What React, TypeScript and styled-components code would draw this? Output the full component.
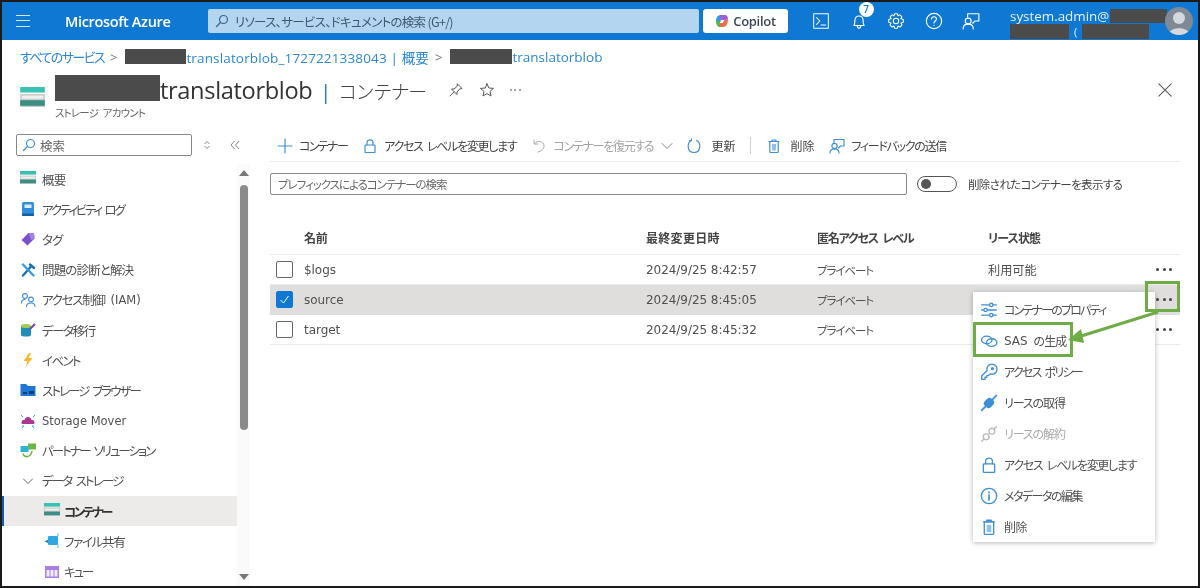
import React from "react";
import styled, { createGlobalStyle } from "styled-components";

const GlobalStyle = createGlobalStyle`
  html, body { margin: 0; padding: 0; background: #fff; }
  body { font-family: "Noto Sans CJK JP", "Noto Sans", sans-serif; font-feature-settings: "palt"; word-spacing: 3px; }
`;

const Page = styled.div`
  position: relative;
  box-sizing: border-box;
  width: 1200px;
  height: 588px;
  border: 2px solid #1a1a1a;
  overflow: hidden;
  display: flex;
  flex-direction: column;
  background: #fff;
  color: #444;
  filter: blur(0.4px);
`;

const TopBar = styled.header`
  height: 38px;
  flex: none;
  background: #0f78d3;
  display: flex;
  align-items: center;
  color: #fff;
  word-spacing: 0;
`;
const Burger = styled.div`
  margin-left: 14px;
  width: 14px;
  height: 10px;
  border-top: 1.4px solid #d5e8f8;
  border-bottom: 1.4px solid #d5e8f8;
  position: relative;
  &::after { content: ""; position: absolute; left: 0; right: 0; top: 3.6px; border-top: 1.4px solid #d5e8f8; }
`;
const Brand = styled.div`
  margin-left: 35px;
  width: 143px;
  font: 600 14.5px "Open Sans", sans-serif;
  letter-spacing: -0.35px;
`;
const GlobalSearch = styled.div`
  width: 491px;
  height: 24px;
  box-sizing: border-box;
  background: #b3d5f0;
  border-radius: 2px;
  display: flex;
  align-items: center;
  gap: 6px;
  padding-left: 7px;
  font-size: 12.5px;
  letter-spacing: -0.7px;
  color: #3f5870;
`;
const CopilotButton = styled.div`
  margin-left: 4px;
  width: 85px;
  height: 24px;
  background: #fff;
  border-radius: 3px;
  display: flex;
  align-items: center;
  justify-content: center;
  gap: 4px;
  font: 600 13px "Open Sans", sans-serif;
  letter-spacing: -0.3px;
  color: #3d4656;
`;
const TopIcons = styled.div`
  margin-left: 23px;
  display: grid;
  grid-template-columns: 20px 20px 20px 20px 20px;
  column-gap: 17.5px;
  align-items: center;
  justify-items: center;
`;
const BellWrap = styled.div`
  position: relative;
  display: flex;
`;
const Badge = styled.span`
  position: absolute;
  top: -10px;
  right: -6px;
  width: 15px;
  height: 15px;
  border-radius: 50%;
  background: #fff;
  color: #0f78d3;
  font: 600 10px/15px "Open Sans", sans-serif;
  text-align: center;
`;
const UserBlock = styled.div`
  margin-left: 29px;
  padding-top: 5px;
  width: 155px;
  display: flex;
  flex-direction: column;
  font: 13.4px/16px "Open Sans", sans-serif;
  color: #e8f2fb;
`;
const UserLine = styled.div`
  display: flex;
  align-items: center;
  height: 15.5px;
  white-space: nowrap;
`;
const Paren = styled.span`
  margin-left: 5px;
  font-size: 11px;
  line-height: 15px;
`;
const Redact = styled.span<{ $w: number; $h: number; $ml?: number }>`
  display: inline-block;
  flex: none;
  width: ${({ $w }) => $w}px;
  height: ${({ $h }) => $h}px;
  margin-left: ${({ $ml }) => $ml ?? 0}px;
  background: #4b4b4b;
`;
const TitleRedact = styled(Redact)`
  align-self: flex-start;
  margin-top: 1px;
`;
const Avatar = styled.div`
  width: 28px;
  height: 28px;
  border-radius: 50%;
  overflow: hidden;
  flex: none;
  display: flex;
`;

const Crumbs = styled.nav`
  height: 34px;
  box-sizing: border-box;
  padding: 0 0 1px 18px;
  flex: none;
  display: flex;
  align-items: center;
  color: #2b87d3;
`;
const CrumbJa = styled.span`
  font-size: 13px;
  letter-spacing: -1.6px;
  white-space: nowrap;
`;
const CrumbLatin = styled.span<{ $track: number }>`
  font: 13.5px "Open Sans", "Noto Sans CJK JP", sans-serif;
  letter-spacing: ${({ $track }) => $track}px;
  word-spacing: 0;
  white-space: nowrap;
`;
const CrumbSep = styled.span`
  margin: 0 8px 0 6px;
  color: #777;
  font: 13px "Open Sans", sans-serif;
`;

const TitleRow = styled.div`
  position: relative;
  height: 56px;
  flex: none;
  display: flex;
  padding-left: 18px;
`;
const TitleIcon = styled.div`
  margin-top: 13px;
  width: 25px;
`;
const TitleText = styled.div`
  margin-left: 10px;
  display: flex;
  flex-direction: column;
`;
const TitleLine = styled.div`
  display: flex;
  align-items: center;
  height: 32px;
`;
const TitleMain = styled.h1`
  margin: 0;
  font: 400 23.6px "Open Sans", "Noto Sans CJK JP", sans-serif;
  letter-spacing: -0.35px;
  color: #333;
  white-space: nowrap;
`;
const TitleBar = styled.span`
  font-size: 20px;
  color: #0f78d3;
  margin: 0 7px 0 8px;
`;
const TitleSuffix = styled.span`
  font: 300 19px "Noto Sans CJK JP", sans-serif;
  letter-spacing: -1.4px;
  color: #444;
`;
const TitleActions = styled.div`
  margin-left: 22px;
  display: flex;
  align-items: center;
  gap: 15px;
  color: #555;
`;
const Subtitle = styled.div`
  margin-top: -1px;
  font-size: 10.5px;
  letter-spacing: -0.8px;
  color: #666;
`;
const CloseIcon = styled.div`
  position: absolute;
  right: 24px;
  top: 7px;
  display: flex;
`;

const Body = styled.div`
  flex: 1;
  min-height: 0;
  display: grid;
  grid-template-columns: 248px 1fr;
`;

const Sidebar = styled.aside`
  display: flex;
  flex-direction: column;
  min-height: 0;
`;
const SideTop = styled.div`
  height: 34px;
  flex: none;
  display: flex;
  align-items: flex-start;
  padding: 4px 0 0 14px;
  box-sizing: border-box;
`;
const SideSearch = styled.div`
  width: 176px;
  height: 22px;
  box-sizing: border-box;
  border: 1px solid #8a8886;
  border-radius: 2px;
  display: flex;
  align-items: center;
  gap: 4px;
  padding-left: 5px;
  font-size: 12.5px;
  color: #666;
`;
const SideTool = styled.span<{ $ml: number }>`
  margin-left: ${({ $ml }) => $ml}px;
  margin-top: 5px;
  color: #888;
  display: flex;
`;
const SideMain = styled.div`
  flex: 1;
  min-height: 0;
  display: grid;
  grid-template-columns: 235px 13px;
`;
const NavList = styled.ul`
  list-style: none;
  margin: 0;
  padding: 0;
  overflow: hidden;
`;
const NavItem = styled.li<{ $sub?: boolean; $active?: boolean; $track: number }>`
  height: 30.2px;
  display: flex;
  align-items: center;
  gap: ${({ $sub }) => ($sub ? "4px" : "6px")};
  box-sizing: border-box;
  padding-left: ${({ $sub }) => ($sub ? "40px" : "16px")};
  font-size: 12.5px;
  letter-spacing: ${({ $track }) => $track}px;
  font-weight: ${({ $active }) => ($active ? 700 : 400)};
  color: ${({ $active }) => ($active ? "#333" : "#505050")};
  background: ${({ $active }) => ($active ? "#edebe9" : "transparent")};
  border-left: 2px solid ${({ $active }) => ($active ? "#0f5fa8" : "transparent")};
  white-space: nowrap;
`;
const NavIcon = styled.span`
  width: 16px;
  height: 16px;
  flex: none;
  display: flex;
`;
const NavLatin = styled.span`
  font-family: "DejaVu Sans", sans-serif;
  font-size: 11.5px;
  letter-spacing: 0;
  word-spacing: 0;
`;
const ScrollTrack = styled.div`
  display: flex;
  flex-direction: column;
  align-items: center;
  background: #fafafa;
  width: 13px;
`;
const ArrowUp = styled.div`
  margin-top: 6px;
  border-left: 5px solid transparent;
  border-right: 5px solid transparent;
  border-bottom: 6px solid #777;
`;
const ScrollThumb = styled.div`
  margin-top: 9px;
  width: 8px;
  height: 245px;
  border-radius: 4px;
  background: #8a8a8a;
`;
const ArrowDown = styled.div`
  margin-top: auto;
  margin-bottom: 6px;
  border-left: 5px solid transparent;
  border-right: 5px solid transparent;
  border-top: 6px solid #777;
`;

const Content = styled.main`
  padding: 0 18px 0 20px;
  display: flex;
  flex-direction: column;
  min-width: 0;
`;
const Toolbar = styled.div`
  height: 31px;
  flex: none;
  display: flex;
  align-items: center;
  border-bottom: 1px solid #edebe9;
  padding: 0 0 0 7px;
  font-size: 12px;
  color: #444;
`;
const ToolButton = styled.span<{ $off?: boolean; $after?: number; $inner?: number; $track?: number }>`
  display: flex;
  align-items: center;
  gap: ${({ $inner }) => $inner ?? 6}px;
  margin-right: ${({ $after }) => $after ?? 15}px;
  letter-spacing: ${({ $track }) => $track ?? -1.3}px;
  color: ${({ $off }) => ($off ? "#a3a3a3" : "#444")};
  white-space: nowrap;
`;
const ToolDivider = styled.span`
  width: 1px;
  height: 17px;
  background: #d2d0ce;
  margin-right: 15px;
`;
const FilterRow = styled.div`
  margin-top: 10px;
  display: flex;
  align-items: center;
  height: 23px;
  flex: none;
`;
const FilterInput = styled.div`
  width: 637px;
  height: 22px;
  box-sizing: border-box;
  border: 1px solid #8a8886;
  border-radius: 2px;
  padding-left: 7px;
  font-size: 11.5px;
  line-height: 20px;
  letter-spacing: -1.05px;
  color: #666;
`;
const Toggle = styled.div`
  margin-left: 10px;
  width: 40px;
  height: 16px;
  box-sizing: border-box;
  border: 1px solid #555;
  border-radius: 8px;
  display: flex;
  align-items: center;
  padding-left: 3px;
  &::before { content: ""; width: 10px; height: 10px; border-radius: 50%; background: #555; }
`;
const ToggleLabel = styled.span`
  margin-left: 11px;
  font-size: 11.5px;
  letter-spacing: -0.65px;
  color: #444;
`;

const Table = styled.div`
  margin-top: 28px;
  display: flex;
  flex-direction: column;
`;
const Row = styled.div<{ $head?: boolean; $selected?: boolean }>`
  display: grid;
  grid-template-columns: 34px 342px 171px 171px 1fr 32px;
  align-items: center;
  height: ${({ $head }) => ($head ? "32px" : "30px")};
  padding-bottom: ${({ $head }) => ($head ? "3px" : "0")};
  box-sizing: border-box;
  border-bottom: 1px solid ${({ $selected }) => ($selected ? "#e0dfde" : "#edebe9")};
  background: ${({ $selected }) => ($selected ? "#e0dedd" : "transparent")};
  font-weight: ${({ $head }) => ($head ? 700 : 400)};
  color: #505050;
`;
const HeadCell = styled.span<{ $track: number }>`
  color: #444;
  font-size: 12px;
  letter-spacing: ${({ $track }) => $track}px;
`;
const Latin = styled.span`
  font-family: "DejaVu Sans", sans-serif;
  font-size: 12px;
  letter-spacing: -0.05px;
  word-spacing: 0;
`;
const AccessCell = styled.span`
  font-size: 11.5px;
  letter-spacing: -1.1px;
`;
const LeaseCell = styled.span`
  font-size: 12.2px;
`;
const Check = styled.span<{ $on?: boolean }>`
  margin-left: 6px;
  width: 17px;
  height: 17px;
  box-sizing: border-box;
  border-radius: 2px;
  border: 1px solid ${({ $on }) => ($on ? "#0f78d3" : "#666")};
  background: ${({ $on }) => ($on ? "#0f78d3" : "#fff")};
  display: flex;
  align-items: center;
  justify-content: center;
`;
const Dots = styled.span<{ $light?: boolean }>`
  display: flex;
  gap: ${({ $light }) => ($light ? 2.5 : 3.5)}px;
  justify-content: center;
  & i {
    width: ${({ $light }) => ($light ? 2 : 3)}px;
    height: ${({ $light }) => ($light ? 2 : 3)}px;
    border-radius: 50%;
    background: ${({ $light }) => ($light ? "#888" : "#444")};
  }
`;

const Menu = styled.div`
  position: absolute;
  left: 971px;
  top: 290px;
  width: 182px;
  height: 250px;
  padding-top: 2px;
  box-sizing: border-box;
  background: #fff;
  box-shadow: 0 1px 5px rgba(0, 0, 0, 0.28);
  display: flex;
  flex-direction: column;
`;
const MenuItem = styled.div<{ $off?: boolean; $track: number }>`
  height: 31px;
  flex: none;
  display: flex;
  align-items: center;
  gap: 6px;
  padding-left: 7px;
  font-size: 12px;
  letter-spacing: ${({ $track }) => $track}px;
  color: ${({ $off }) => ($off ? "#aaa" : "#505050")};
  white-space: nowrap;
`;
const MenuIcon = styled.span`
  width: 18px;
  height: 18px;
  flex: none;
  display: flex;
`;
const Highlight = styled.div<{ $x: number; $y: number; $w: number; $h: number }>`
  position: absolute;
  left: ${({ $x }) => $x}px;
  top: ${({ $y }) => $y}px;
  width: ${({ $w }) => $w}px;
  height: ${({ $h }) => $h}px;
  box-sizing: border-box;
  border: 3px solid #6eac46;
`;
const ArrowLayer = styled.svg`
  position: absolute;
  left: 1060px;
  top: 305px;
`;

const B = "#3f8fd8";

const Ic = ({ s = 16, children, stroke = B, sw = 1.2 }: { s?: number; children: React.ReactNode; stroke?: string; sw?: number }) => (
  <svg width={s} height={s} viewBox="0 0 16 16" fill="none" stroke={stroke} strokeWidth={sw} strokeLinecap="round" strokeLinejoin="round">
    {children}
  </svg>
);

const StorageIcon = ({ w = 16, h = 16 }: { w?: number; h?: number }) => (
  <svg width={w} height={h} viewBox="0 0 16 13">
    <rect x="0" y="0" width="16" height="3.6" fill="#37c2b1" />
    <rect x="0" y="4.6" width="16" height="8.4" fill="#c9c9c9" />
    <rect x="0" y="8.6" width="16" height="3.6" fill="#3a8f82" />
    <rect x="1" y="5.6" width="14" height="2" fill="#f0f0f0" />
  </svg>
);
const BookIcon = () => (
  <svg width="16" height="16" viewBox="0 0 16 16">
    <rect x="2" y="1" width="12" height="14" rx="1.5" fill="#2f8fdc" />
    <rect x="4.5" y="3.5" width="7" height="3.5" fill="#d9ecfb" />
    <rect x="2" y="12.5" width="12" height="2.5" fill="#17629f" />
  </svg>
);
const TagIcon = () => (
  <svg width="16" height="16" viewBox="0 0 16 16">
    <path d="M1.5 9 L8.5 2 L14 2 L14.5 7.5 L7.5 14.5 Z" fill="#7b4fc9" />
    <path d="M8.5 2 L14 2 L14.5 7.5 L11 9 Z" fill="#a283e0" />
  </svg>
);
const ToolsIcon = () => (
  <svg width="16" height="16" viewBox="0 0 16 16" fill="none" strokeWidth="2.4" strokeLinecap="round">
    <path d="M3 13.5 L11 4.5" stroke="#1b6fb5" />
    <path d="M3 2.5 L13.5 13.5" stroke="#3b9be0" />
    <path d="M10 2.5 L14 6" stroke="#1b6fb5" />
  </svg>
);
const UsersIcon = () => (
  <Ic sw={1.1}>
    <circle cx="5" cy="4" r="2.4" />
    <path d="M1.5 11 C1.5 8.5 3 7.5 5 7.5" />
    <circle cx="11" cy="7.5" r="2.4" />
    <path d="M6.5 14.5 C6.5 12 8.5 11 11 11 C13.5 11 15 12 15 14.5" />
  </Ic>
);
const MigrateIcon = () => (
  <svg width="16" height="16" viewBox="0 0 16 16">
    <path d="M1 4 H11 V13 C11 15 1 15 1 13 Z" fill="#1f8fb5" />
    <ellipse cx="6" cy="4" rx="5" ry="2" fill="#9fce4e" />
    <path d="M10 7 L15 2" stroke="#7a3fb0" strokeWidth="2" />
  </svg>
);
const BoltIcon = () => (
  <svg width="16" height="16" viewBox="0 0 16 16">
    <path d="M9 1 L3.5 9 H7.5 L5.5 15 L12.5 6 H8.5 L11 1 Z" fill="#fbb62c" />
  </svg>
);
const FolderIcon = () => (
  <svg width="16" height="16" viewBox="0 0 16 16">
    <path d="M0.5 2 H6 L8 4 H15.5 V14 H0.5 Z" fill="#1f78d6" />
    <rect x="9" y="9" width="5" height="3" fill="#0b3f78" />
    <rect x="3" y="10" width="4" height="2" fill="#0b3f78" />
  </svg>
);
const CloudIcon = () => (
  <svg width="16" height="16" viewBox="0 0 16 16">
    <path d="M2 11 C0.5 8 3 6.5 4.5 7 C5 3 11 3 11.5 7 C13.5 6.5 15.5 8.5 14 11 Z" fill="#a8398f" />
    <path d="M1 2 L3 4 M15 2 L13 4 M2 13 H4 L2 15 M14 13 H12 L14 15" stroke="#35b8e0" strokeWidth="1" fill="none" />
  </svg>
);
const PartnerIcon = () => (
  <svg width="16" height="16" viewBox="0 0 16 16">
    <rect x="8" y="0.5" width="8" height="6" fill="#6fb441" />
    <rect x="0.5" y="3" width="8" height="6" fill="#30b4dc" />
    <path d="M3 10.5 C3.5 15 11 15 12 8" fill="none" stroke="#6fb441" strokeWidth="1.6" />
  </svg>
);
const FileShareIcon = () => (
  <svg width="16" height="16" viewBox="0 0 16 16">
    <rect x="4" y="3" width="10" height="9" rx="1" fill="#2fa8e0" />
    <path d="M0.5 8.5 L4 6.5 V10 Z" fill="#2f7fc4" />
    <path d="M14 0.5 V3 M14 12 V15" stroke="#35c2ea" strokeWidth="1" />
  </svg>
);
const QueueIcon = () => (
  <svg width="16" height="16" viewBox="0 0 16 16">
    <rect x="1" y="2" width="14" height="12" fill="#a780e6" />
    <rect x="2.5" y="6" width="3" height="6.5" fill="#f2ecfc" />
    <rect x="6.5" y="6" width="3" height="6.5" fill="#f2ecfc" />
    <rect x="10.5" y="6" width="3" height="6.5" fill="#f2ecfc" />
  </svg>
);
const ChevronIcon = () => (
  <Ic stroke="#666" sw={1}>
    <path d="M3.5 6 L8 10.5 L12.5 6" />
  </Ic>
);
const SearchGlass = ({ color = B }: { color?: string }) => (
  <svg width="14" height="14" viewBox="0 0 14 14" fill="none" stroke={color} strokeWidth="1.2" strokeLinecap="round">
    <circle cx="8.5" cy="5.5" r="4" />
    <path d="M5.5 8.5 L1.5 12.5" />
  </svg>
);
const LockIcon = ({ s = 16 }: { s?: number }) => (
  <Ic s={s}>
    <rect x="3" y="7" width="10" height="7.5" rx="0.6" />
    <path d="M5 7 V4.5 C5 1 11 1 11 4.5 V7" />
  </Ic>
);
const TrashIcon = ({ s = 16 }: { s?: number }) => (
  <Ic s={s}>
    <path d="M3 3.5 H13 M6 3.5 V2 H10 V3.5" />
    <rect x="3.8" y="3.5" width="8.4" height="11" rx="0.8" />
    <rect x="6" y="6" width="4" height="6.5" fill="#8fc1ee" stroke="none" />
  </Ic>
);

const navItems: { label: React.ReactNode; icon: React.ReactNode; track: number; sub?: boolean; active?: boolean }[] = [
  { label: "概要", icon: <StorageIcon w={16} h={13} />, track: -0.65 },
  { label: "アクティビティ ログ", icon: <BookIcon />, track: -2.2 },
  { label: "タグ", icon: <TagIcon />, track: -1 },
  { label: "問題の診断と解決", icon: <ToolsIcon />, track: -0.85 },
  { label: <>アクセス制御 <NavLatin>(IAM)</NavLatin></>, icon: <UsersIcon />, track: -1.3 },
  { label: "データ移行", icon: <MigrateIcon />, track: -1.45 },
  { label: "イベント", icon: <BoltIcon />, track: -1.65 },
  { label: "ストレージ ブラウザー", icon: <FolderIcon />, track: -1.95 },
  { label: <NavLatin>Storage Mover</NavLatin>, icon: <CloudIcon />, track: 0 },
  { label: "パートナー ソリューション", icon: <PartnerIcon />, track: -2.05 },
  { label: "データ ストレージ", icon: <ChevronIcon />, track: -1.8 },
  { label: "コンテナー", icon: <StorageIcon w={16} h={13} />, track: -2.4, sub: true, active: true },
  { label: "ファイル共有", icon: <FileShareIcon />, track: -1.3, sub: true },
  { label: "キュー", icon: <QueueIcon />, track: -2.2, sub: true },
];

const rows = [
  { name: "$logs", date: "2024/9/25 8:42:57", lease: "利用可能" },
  { name: "source", date: "2024/9/25 8:45:05", lease: "", selected: true },
  { name: "target", date: "2024/9/25 8:45:32", lease: "" },
];

const menuItems: { label: React.ReactNode; icon: React.ReactNode; track: number; off?: boolean }[] = [
  {
    label: "コンテナーのプロパティ",
    track: -1.8,
    icon: (
      <Ic s={18}>
        <path d="M1.5 3.5 H14.5 M1.5 8 H14.5 M1.5 12.5 H14.5" />
        <circle cx="10" cy="3.5" r="1.5" fill="#fff" />
        <circle cx="5" cy="8" r="1.5" fill="#fff" />
        <circle cx="10" cy="12.5" r="1.5" fill="#fff" />
      </Ic>
    ),
  },
  {
    label: <><Latin>SAS</Latin> の生成</>,
    track: -0.9,
    icon: (
      <Ic s={18}>
        <ellipse cx="6" cy="7" rx="4.6" ry="3.4" />
        <ellipse cx="10.4" cy="9.4" rx="4.6" ry="3.4" />
      </Ic>
    ),
  },
  {
    label: "アクセス ポリシー",
    track: -1.75,
    icon: (
      <Ic s={18}>
        <path d="M10.5 1 A4.5 4.5 0 1 1 9 9.7 L7.5 11.2 H6 V12.7 H4.5 V14.5 H1.5 V11.5 L6.3 6.7 A4.5 4.5 0 0 1 10.5 1 Z" />
        <circle cx="11" cy="5" r="0.8" />
      </Ic>
    ),
  },
  {
    label: "リースの取得",
    track: -1.1,
    icon: (
      <Ic s={18} sw={1.6}>
        <path d="M1.5 14.5 L5 11 M11 5 L14.5 1.5" />
        <rect x="4.5" y="5" width="7" height="6" rx="2" transform="rotate(-45 8 8)" fill="#3f8fd8" />
      </Ic>
    ),
  },
  {
    label: "リースの解約",
    track: -1.1,
    off: true,
    icon: (
      <Ic s={18} stroke="#bbb">
        <path d="M1.5 14.5 L3.5 12.5 M12.5 3.5 L14.5 1.5" />
        <circle cx="5.5" cy="10.5" r="2.6" />
        <circle cx="10.5" cy="5.5" r="2.6" />
      </Ic>
    ),
  },
  { label: "アクセス レベルを変更します", track: -1.3, icon: <LockIcon s={18} /> },
  {
    label: "メタデータの編集",
    track: -1.5,
    icon: (
      <Ic s={18}>
        <circle cx="8" cy="8" r="6.8" />
        <path d="M8 7.2 V11.5 M8 4.6 V5" strokeWidth="1.5" />
      </Ic>
    ),
  },
  { label: "削除", track: -0.6, icon: <TrashIcon s={18} /> },
];

export default function App() {
  return (
    <>
      <GlobalStyle />
      <Page>
        <TopBar>
          <Burger />
          <Brand>Microsoft Azure</Brand>
          <GlobalSearch>
            <SearchGlass color="#39658f" />
            リソース、サービス、ドキュメントの検索 (G+/)
          </GlobalSearch>
          <CopilotButton>
            <svg width="14" height="14" viewBox="0 0 14 14">
              <path d="M1 7 C1 2 4 1 6 1 H7 L5 7 Z" fill="#2f9be8" />
              <path d="M6 1 H10 C12 1 13 3 13 5 L9 7 H5 Z" fill="#a35bd6" />
              <path d="M1 7 H6 L5 13 C3 13 1 11 1 7 Z" fill="#55b84f" />
              <path d="M5 7 H9 L13 5 C13 10 11 13 8 13 H5 Z" fill="#ef6a45" />
              <path d="M6 6 H9 L8 9 H5 Z" fill="#fff" />
            </svg>
            Copilot
          </CopilotButton>
          <TopIcons>
            <Ic s={18} stroke="#fff" sw={0.9}>
              <rect x="1.5" y="1.5" width="13" height="13" />
              <path d="M4 5 L7 8 L4 11 M8 11.5 H12" />
            </Ic>
            <BellWrap>
              <Ic s={18} stroke="#fff" sw={1}>
                <path d="M3.5 12 C4.5 10.5 4 9 4.5 6.5 C5 2.5 11 2.5 11.5 6.5 C12 9 11.5 10.5 12.5 12 Z M6.5 12.5 C6.5 15 9.5 15 9.5 12.5" />
              </Ic>
              <Badge>7</Badge>
            </BellWrap>
            <Ic s={18} stroke="#fff" sw={0.9}>
              <circle cx="8" cy="8" r="2.4" />
              <path d="M6.8 1.5 H9.2 L9.7 3.4 L11.4 2.5 L13.2 4.2 L12.3 6 L14.5 6.7 V9.2 L12.4 9.8 L13.3 11.6 L11.6 13.4 L9.8 12.5 L9.2 14.5 H6.8 L6.2 12.5 L4.4 13.4 L2.7 11.6 L3.6 9.8 L1.5 9.2 V6.7 L3.7 6 L2.8 4.2 L4.6 2.5 L6.3 3.4 Z" />
            </Ic>
            <Ic s={18} stroke="#fff" sw={1}>
              <circle cx="8" cy="8" r="6.8" />
              <path d="M5.8 6.2 C5.8 3.6 10.2 3.6 10.2 6.2 C10.2 8 8 8 8 9.8 M8 11.8 V12" />
            </Ic>
            <Ic s={18} stroke="#fff" sw={1}>
              <circle cx="5.5" cy="8" r="2.6" />
              <path d="M1 15 C1 12 3 10.8 5.5 10.8 C8 10.8 10 12 10 15" />
              <path d="M5 4.5 V1.5 H15 V8 H11.5 L9.5 10" />
            </Ic>
          </TopIcons>
          <UserBlock>
            <UserLine>
              system.admin@
              <Redact $w={57} $h={14} $ml={1} />
            </UserLine>
            <UserLine>
              <Redact $w={59} $h={15} />
              <Paren>(</Paren>
              <Redact $w={67} $h={15} $ml={5} />
            </UserLine>
          </UserBlock>
          <Avatar>
            <svg width="28" height="28" viewBox="0 0 28 28">
              <rect width="28" height="28" fill="#7f8a96" />
              <circle cx="14" cy="11" r="6" fill="#d5d8dc" />
              <path d="M3 28 C4 19 24 19 25 28 Z" fill="#d5d8dc" />
            </svg>
          </Avatar>
        </TopBar>

        <Crumbs>
          <CrumbJa>すべてのサービス</CrumbJa>
          <CrumbSep>&gt;</CrumbSep>
          <Redact $w={61} $h={15} />
          <CrumbLatin $track={0.15}>translatorblob_1727221338043 | 概要</CrumbLatin>
          <CrumbSep>&gt;</CrumbSep>
          <Redact $w={62} $h={15} />
          <CrumbLatin $track={0}>translatorblob</CrumbLatin>
        </Crumbs>

        <TitleRow>
          <TitleIcon>
            <StorageIcon w={25} h={20} />
          </TitleIcon>
          <TitleText>
            <TitleLine>
              <TitleRedact $w={105} $h={26} />
              <TitleMain>
                translatorblob<TitleBar>|</TitleBar>
                <TitleSuffix>コンテナー</TitleSuffix>
              </TitleMain>
              <TitleActions>
                <Ic stroke="#555" sw={1}>
                  <path d="M9.5 2 L14 6.5 L11.5 7 L9 10 L9 12.5 L3.5 7 L6 7 L9 4.5 Z M6 10 L2 14" />
                </Ic>
                <Ic stroke="#555" sw={1}>
                  <path d="M8 1.8 L9.9 6 L14.5 6.4 L11 9.4 L12 14 L8 11.6 L4 14 L5 9.4 L1.5 6.4 L6.1 6 Z" />
                </Ic>
                <Dots $light>
                  <i />
                  <i />
                  <i />
                </Dots>
              </TitleActions>
            </TitleLine>
            <Subtitle>ストレージ アカウント</Subtitle>
          </TitleText>
          <CloseIcon>
            <Ic s={18} stroke="#555" sw={0.9}>
              <path d="M2.5 2.5 L13.5 13.5 M13.5 2.5 L2.5 13.5" />
            </Ic>
          </CloseIcon>
        </TitleRow>

        <Body>
          <Sidebar>
            <SideTop>
              <SideSearch>
                <SearchGlass />
                検索
              </SideSearch>
              <SideTool $ml={9}>
                <svg width="12" height="12" viewBox="0 0 12 12" fill="none" stroke="#888" strokeWidth="1">
                  <path d="M3.5 5 L6 2.5 L8.5 5 M3.5 7 L6 9.5 L8.5 7" />
                </svg>
              </SideTool>
              <SideTool $ml={16}>
                <svg width="12" height="12" viewBox="0 0 12 12" fill="none" stroke="#888" strokeWidth="1">
                  <path d="M5.5 2 L2 6 L5.5 10 M10 2 L6.5 6 L10 10" />
                </svg>
              </SideTool>
            </SideTop>
            <SideMain>
              <NavList>
                {navItems.map((item, i) => (
                  <NavItem key={i} $sub={item.sub} $active={item.active} $track={item.track}>
                    <NavIcon>{item.icon}</NavIcon>
                    {item.label}
                  </NavItem>
                ))}
              </NavList>
              <ScrollTrack>
                <ArrowUp />
                <ScrollThumb />
                <ArrowDown />
              </ScrollTrack>
            </SideMain>
          </Sidebar>

          <Content>
            <Toolbar>
              <ToolButton $track={-1.6}>
                <Ic>
                  <path d="M8 1 V15 M1 8 H15" />
                </Ic>
                コンテナー
              </ToolButton>
              <ToolButton>
                <LockIcon />
                アクセス レベルを変更します
              </ToolButton>
              <ToolButton $off $after={11}>
                <Ic stroke="#aaa" sw={1}>
                  <path d="M3 2 V6 H7 M3.5 5.5 C6 2 13 3 13 8 C13 11 10 13.5 7 14" />
                </Ic>
                コンテナーを復元する
                <Ic stroke="#888" sw={1}>
                  <path d="M3 5.5 L8 10.5 L13 5.5" />
                </Ic>
              </ToolButton>
              <ToolButton $inner={9} $track={0}>
                <Ic>
                  <path d="M5.5 2.5 C0.5 5 1 14.5 8 14.5 C15 14.5 15.5 5 10.5 2.5 M5.5 2.5 V0.8 M5.5 2.5 H3.5" />
                </Ic>
                更新
              </ToolButton>
              <ToolDivider />
              <ToolButton $inner={8} $track={0}>
                <TrashIcon />
                削除
              </ToolButton>
              <ToolButton>
                <Ic>
                  <circle cx="5.5" cy="8" r="2.6" />
                  <path d="M1 15 C1 12 3 10.8 5.5 10.8 C8 10.8 10 12 10 15" />
                  <path d="M5 4.5 V1.5 H15 V8 H11.5 L9.5 10" />
                </Ic>
                フィードバックの送信
              </ToolButton>
            </Toolbar>

            <FilterRow>
              <FilterInput>プレフィックスによるコンテナーの検索</FilterInput>
              <Toggle />
              <ToggleLabel>削除されたコンテナーを表示する</ToggleLabel>
            </FilterRow>

            <Table>
              <Row $head>
                <span />
                <HeadCell $track={-0.3}>名前</HeadCell>
                <HeadCell $track={0.3}>最終変更日時</HeadCell>
                <HeadCell $track={-1.2}>匿名アクセス レベル</HeadCell>
                <HeadCell $track={-0.9}>リース状態</HeadCell>
                <span />
              </Row>
              {rows.map((r) => (
                <Row key={r.name} $selected={r.selected}>
                  <Check $on={r.selected}>
                    {r.selected && (
                      <svg width="11" height="11" viewBox="0 0 11 11" fill="none" stroke="#fff" strokeWidth="1">
                        <path d="M1.5 6 L4.5 9 L9.5 2" />
                      </svg>
                    )}
                  </Check>
                  <Latin>{r.name}</Latin>
                  <Latin>{r.date}</Latin>
                  <AccessCell>プライベート</AccessCell>
                  <LeaseCell>{r.lease}</LeaseCell>
                  <Dots>
                    <i />
                    <i />
                    <i />
                  </Dots>
                </Row>
              ))}
            </Table>
          </Content>
        </Body>

        <Menu>
          {menuItems.map((m, i) => (
            <MenuItem key={i} $off={m.off} $track={m.track}>
              <MenuIcon>{m.icon}</MenuIcon>
              {m.label}
            </MenuItem>
          ))}
        </Menu>
        <Highlight $x={1143} $y={279} $w={35} $h={31} />
        <Highlight $x={971} $y={320} $w={100} $h={35} />
        <ArrowLayer width="110" height="45" viewBox="0 0 110 45">
          <path d="M96 5 L16 30" stroke="#6eac46" strokeWidth="3" />
          <path d="M6 33 L19 22 L22 36 Z" fill="#6eac46" />
        </ArrowLayer>
      </Page>
    </>
  );
}
